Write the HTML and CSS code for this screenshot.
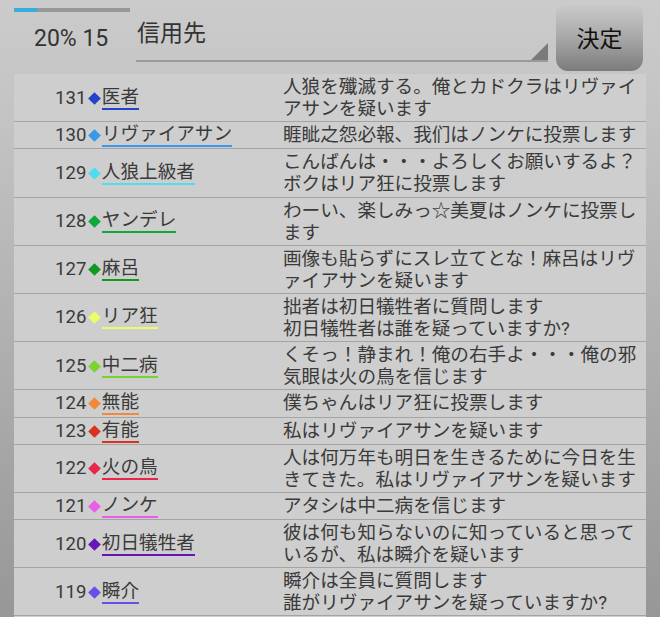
FILE: index.html
```html
<!DOCTYPE html>
<html lang="ja">
<head>
<meta charset="utf-8">
<title>信用先</title>
<link rel="stylesheet" href="styles.css">
</head>
<body>
<header class="top">
  <div class="status">
    <div class="progress"><div class="fill" style="width:20%"></div></div>
    <div class="count">20% 15</div>
  </div>
  <div class="spinner">
    <span class="spinner-text">信用先</span>
    <span class="arrow"></span>
  </div>
  <button class="decide">決定</button>
</header>
<ul class="list">
  <li class="row"><div class="who"><span class="no">131</span><span class="dia" style="--c:#2443c8"></span><span class="name" style="--c:#2443c8">医者</span></div><div class="msg">人狼を殲滅する。俺とカドクラはリヴァイアサンを疑います</div></li>
  <li class="row"><div class="who"><span class="no">130</span><span class="dia" style="--c:#3b97e8"></span><span class="name" style="--c:#3b97e8">リヴァイアサン</span></div><div class="msg">睚眦之怨必報、我们はノンケに投票します</div></li>
  <li class="row"><div class="who"><span class="no">129</span><span class="dia" style="--c:#4fdcf0"></span><span class="name" style="--c:#4fdcf0">人狼上級者</span></div><div class="msg">こんばんは・・・よろしくお願いするよ？ボクはリア狂に投票します</div></li>
  <li class="row"><div class="who"><span class="no">128</span><span class="dia" style="--c:#10a83a"></span><span class="name" style="--c:#10a83a">ヤンデレ</span></div><div class="msg">わーい、楽しみっ☆美夏はノンケに投票します</div></li>
  <li class="row"><div class="who"><span class="no">127</span><span class="dia" style="--c:#139a1e"></span><span class="name" style="--c:#139a1e">麻呂</span></div><div class="msg">画像も貼らずにスレ立てとな！麻呂はリヴァイアサンを疑います</div></li>
  <li class="row"><div class="who"><span class="no">126</span><span class="dia" style="--c:#ecfb6a"></span><span class="name" style="--c:#ecfb6a">リア狂</span></div><div class="msg">拙者は初日犠牲者に質問します<br>初日犠牲者は誰を疑っていますか?</div></li>
  <li class="row"><div class="who"><span class="no">125</span><span class="dia" style="--c:#79d433"></span><span class="name" style="--c:#79d433">中二病</span></div><div class="msg">くそっ！静まれ！俺の右手よ・・・俺の邪気眼は火の鳥を信じます</div></li>
  <li class="row"><div class="who"><span class="no">124</span><span class="dia" style="--c:#f08a3a"></span><span class="name" style="--c:#f08a3a">無能</span></div><div class="msg">僕ちゃんはリア狂に投票します</div></li>
  <li class="row"><div class="who"><span class="no">123</span><span class="dia" style="--c:#d8331f"></span><span class="name" style="--c:#d8331f">有能</span></div><div class="msg">私はリヴァイアサンを疑います</div></li>
  <li class="row"><div class="who"><span class="no">122</span><span class="dia" style="--c:#e8254a"></span><span class="name" style="--c:#e8254a">火の鳥</span></div><div class="msg">人は何万年も明日を生きるために今日を生きてきた。私はリヴァイアサンを疑います</div></li>
  <li class="row"><div class="who"><span class="no">121</span><span class="dia" style="--c:#e85ee8"></span><span class="name" style="--c:#e85ee8">ノンケ</span></div><div class="msg">アタシは中二病を信じます</div></li>
  <li class="row"><div class="who"><span class="no">120</span><span class="dia" style="--c:#6a14b4"></span><span class="name" style="--c:#6a14b4">初日犠牲者</span></div><div class="msg">彼は何も知らないのに知っていると思っているが、私は瞬介を疑います</div></li>
  <li class="row"><div class="who"><span class="no">119</span><span class="dia" style="--c:#6552e4"></span><span class="name" style="--c:#6552e4">瞬介</span></div><div class="msg">瞬介は全員に質問します<br>誰がリヴァイアサンを疑っていますか?</div></li>
</ul>
</body>
</html>
```

FILE: styles.css
```css
html, body {
  margin: 0;
  padding: 0;
  height: 100%;
}

body {
  display: flex;
  flex-direction: column;
  overflow: hidden;
  background: linear-gradient(to bottom, #cbcbcb 0%, #c3c3c3 20%, #979797 100%);
  font-family: Roboto, "Noto Sans CJK JP", sans-serif;
  color: #3a3a3a;
}

.top {
  display: flex;
  align-items: flex-start;
  height: 74px;
  box-sizing: border-box;
  padding: 2px 17px 0 14px;
  flex: none;
}

.status {
  width: 116px;
  padding-top: 6px;
}

.progress {
  height: 4px;
  background: #979797;
}

.fill {
  height: 100%;
  background: #35ade0;
  border-radius: 2px 0 0 2px;
}

.count {
  margin-top: 13px;
  margin-left: 20px;
  font-size: 23px;
  line-height: 27px;
  color: #333;
  white-space: nowrap;
}

.spinner {
  position: relative;
  width: 412px;
  height: 60px;
  margin-left: 6px;
  box-sizing: border-box;
  border-bottom: 2px solid #9a9a9a;
  padding-top: 17px;
  padding-left: 1px;
}

.spinner-text {
  font-size: 23px;
  line-height: 30px;
  color: #333;
}

.arrow {
  position: absolute;
  right: 0;
  bottom: 0;
  width: 17px;
  height: 17px;
  background: #7b7b7b;
  clip-path: polygon(100% 0, 100% 100%, 0 100%);
}

.decide {
  width: 87px;
  height: 69px;
  margin-left: 8px;
  border: none;
  border-radius: 12px;
  background: linear-gradient(to bottom, #cdcdcd 0%, #a9a9a9 50%, #7c7c7c 100%);
  font-family: Roboto, "Noto Sans CJK JP", sans-serif;
  font-size: 23px;
  color: #111;
  padding: 0;
}

.list {
  flex: 1;
  list-style: none;
  margin: 0 14px;
  padding: 0;
  background: #cecece;
}

.row {
  display: flex;
  align-items: stretch;
  padding: 2px 0 1.2px;
  border-bottom: 1px solid #a4a4a4;
}

.who {
  width: 269px;
  flex: none;
  box-sizing: border-box;
  padding-left: 41px;
  display: flex;
  align-items: center;
  font-size: 18.6px;
}

.no {
  line-height: 21px;
  color: #3a3a3a;
}

.dia {
  width: 9px;
  height: 9px;
  margin: 0 3px 0 3.5px;
  background: var(--c);
  transform: rotate(45deg);
  flex: none;
}

.name {
  line-height: 21px;
  border-bottom: 2px solid var(--c);
  white-space: nowrap;
}

.msg {
  width: 360px;
  font-size: 18.6px;
  line-height: 22px;
  color: #3a3a3a;
  line-break: normal;
}
```
